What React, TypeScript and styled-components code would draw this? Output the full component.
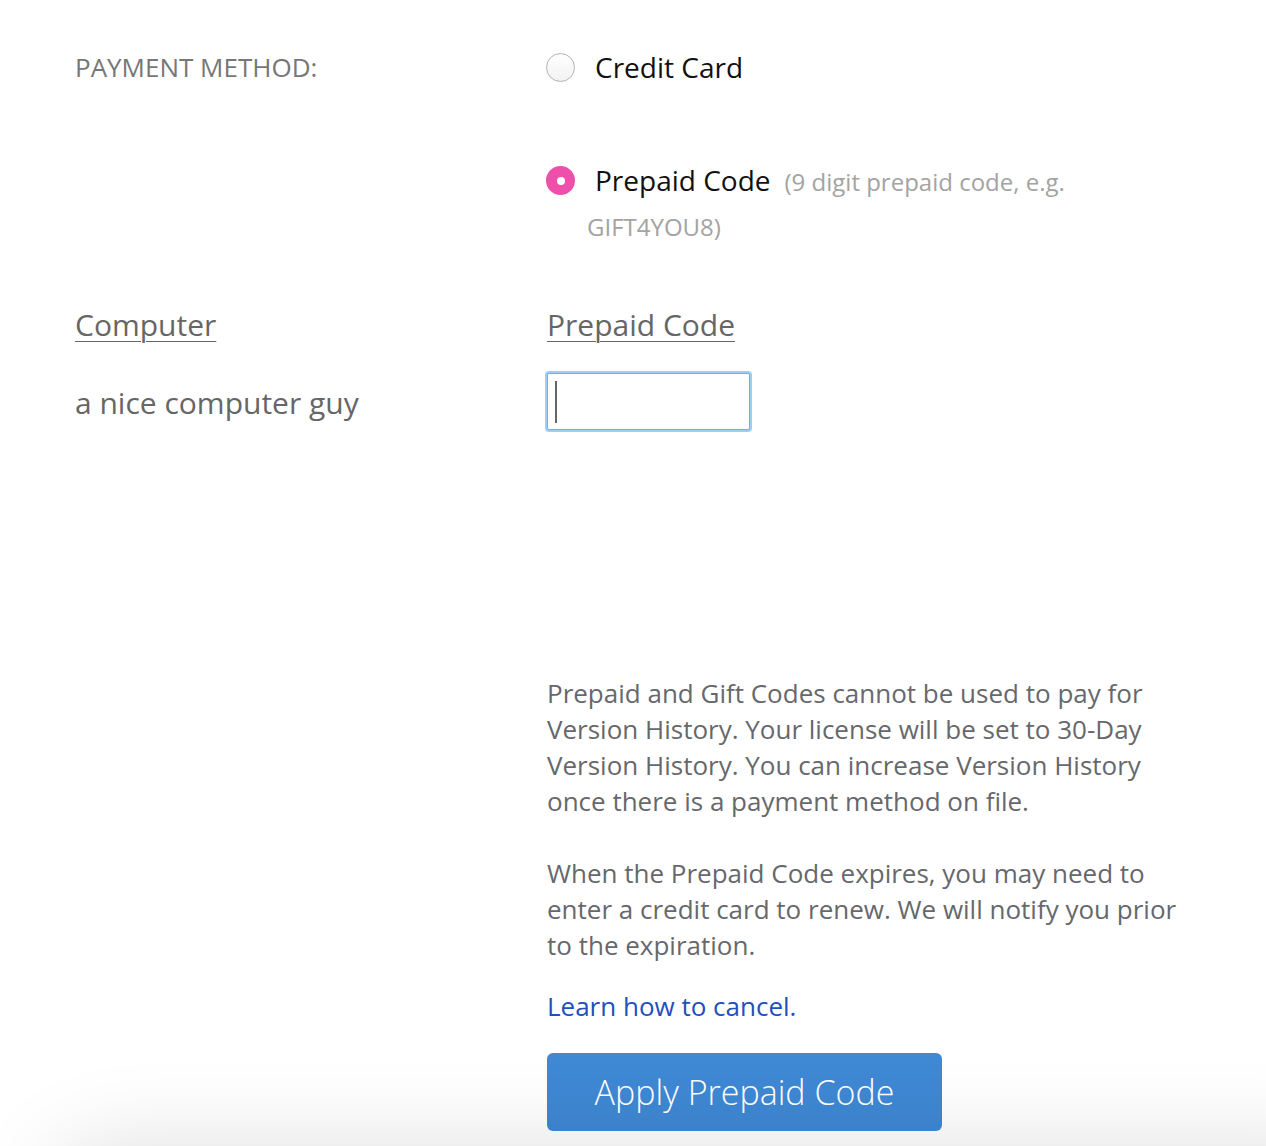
import styled, { createGlobalStyle } from 'styled-components';

const GlobalStyle = createGlobalStyle`
    html, body {
        margin: 0;
        padding: 0;
        background: #fff;
        font-family: "Open Sans", "Noto Sans", sans-serif;
    }
`;

//STYLE

const Page = styled.div`
    padding: 45px 0 15px 75px;
`;

const Row = styled.div`
    display: grid;
    grid-template-columns: 472px 640px;
`;

const FieldLabel = styled.div`
    font-size: 26px;
    line-height: 45px;
    color: #777;
    text-transform: uppercase;
`;

const Options = styled.div`
    display: flex;
    flex-direction: column;
    gap: 68px;
`;

const Option = styled.label`
    display: flex;
    align-items: flex-start;
    cursor: pointer;
`;

const Radio = styled.span<{ $checked?: boolean }>`
    flex: none;
    box-sizing: border-box;
    width: 29px;
    height: 29px;
    margin: 8px 12px 0 -1px;
    border-radius: 50%;
    display: flex;
    align-items: center;
    justify-content: center;
    background: ${p => p.$checked ? '#ee4fab' : 'linear-gradient(#fff, #f2f2f2)'};
    border: ${p => p.$checked ? 'none' : '1.5px solid #b3b3b3'};

    &::after {
        content: '';
        display: ${p => p.$checked ? 'block' : 'none'};
        width: 8px;
        height: 8px;
        border-radius: 50%;
        background: #fff;
    }
`;

const OptionText = styled.span`
    font-size: 28px;
    line-height: 45px;
    color: #111;
    text-indent: 8px;
`;

const OptionName = styled.span`
    color: #111;
`;

const Hint = styled.span`
    font-size: 24px;
    line-height: 40px;
    color: #a3a3a3;
    margin-left: 14px;
`;

const DetailRow = styled(Row)`
    margin-top: 57px;
`;

const Heading = styled.div`
    font-size: 30px;
    line-height: 40px;
    color: #666;
    text-decoration: underline;
    text-underline-offset: 5px;
    text-decoration-thickness: 1px;
`;

const Value = styled.div`
    margin-top: 38px;
    font-size: 30px;
    line-height: 40px;
    color: #666;
`;

const CodeInput = styled.div`
    box-sizing: border-box;
    margin-top: 28px;
    width: 203px;
    height: 57px;
    border: 1px solid #7eaadd;
    border-radius: 2px;
    box-shadow: 0 0 0 2px #a0cdf8;
    padding: 7px 0 0 7px;
    background: #fff;
`;

const Caret = styled.span`
    display: block;
    width: 2px;
    height: 42px;
    background: #666;
`;

const InfoRow = styled(Row)`
    margin-top: 245px;
`;

const Info = styled.div`
    grid-column: 2;
    font-size: 26px;
    line-height: 36px;
    color: #66686c;

    p {
        margin: 0 0 36px;
    }
`;

const Notice = styled.p`
    && {
        margin-bottom: 25px;
    }
`;

const Link = styled.a`
    display: block;
    font-size: 26px;
    line-height: 36px;
    color: #2150bd;
    text-decoration: none;
`;

const ApplyButton = styled.button`
    margin-top: 29px;
    width: 395px;
    height: 78px;
    border: none;
    border-radius: 6px;
    background: #3f88d4;
    color: #fff;
    font-family: "Open Sans", "Noto Sans", sans-serif;
    font-size: 34px;
    font-weight: 300;
    cursor: pointer;
`;

const FooterShade = styled.div`
    position: fixed;
    top: 100vh;
    left: 50px;
    right: -100px;
    height: 120px;
    border-radius: 60px;
    box-shadow: 0 0 90px rgba(0, 0, 0, 0.13);
    pointer-events: none;
`;

const App = () => (
    <>
        <GlobalStyle />
        <Page>
            <Row>
                <FieldLabel>Payment Method:</FieldLabel>
                <Options>
                    <Option>
                        <Radio />
                        <OptionText>
                            <OptionName>Credit Card</OptionName>
                        </OptionText>
                    </Option>
                    <Option>
                        <Radio $checked />
                        <OptionText>
                            <OptionName>Prepaid Code</OptionName>
                            <Hint>(9 digit prepaid code, e.g. GIFT4YOU8)</Hint>
                        </OptionText>
                    </Option>
                </Options>
            </Row>

            <DetailRow>
                <div>
                    <Heading>Computer</Heading>
                    <Value>a nice computer guy</Value>
                </div>
                <div>
                    <Heading>Prepaid Code</Heading>
                    <CodeInput>
                        <Caret />
                    </CodeInput>
                </div>
            </DetailRow>

            <InfoRow>
                <Info>
                    <p>
                        Prepaid and Gift Codes cannot be used to pay for Version History. Your license will be set to
                        30-Day Version History. You can increase Version History once there is a payment method on file.
                    </p>
                    <Notice>
                        When the Prepaid Code expires, you may need to enter a credit card to renew. We will notify you
                        prior to the expiration.
                    </Notice>
                    <Link href="#">Learn how to cancel.</Link>
                    <ApplyButton>Apply Prepaid Code</ApplyButton>
                </Info>
            </InfoRow>
        </Page>
        <FooterShade />
    </>
);

export default App;
